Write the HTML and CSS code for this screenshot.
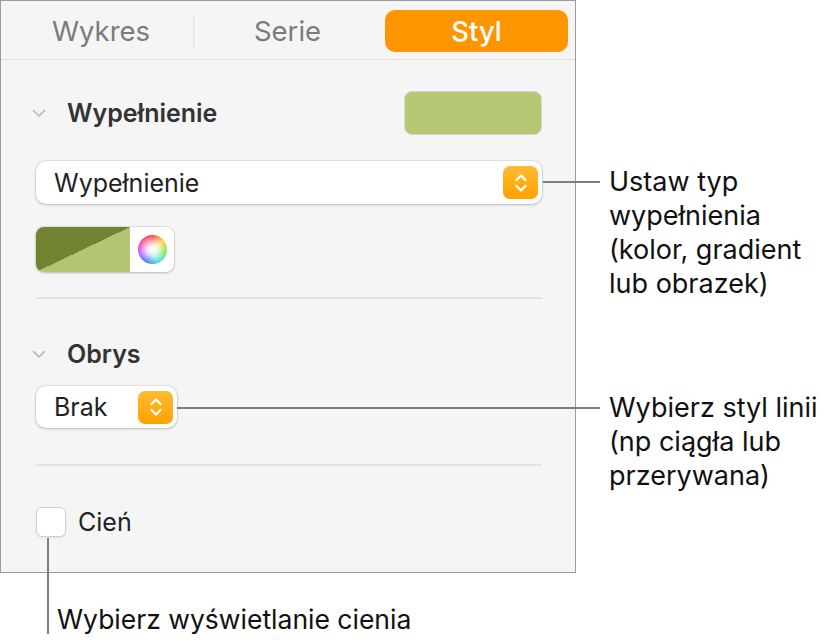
FILE: index.html
```html
<!DOCTYPE html>
<html lang="pl">
<head>
  <meta charset="UTF-8" />
  <title>Styl wykresu</title>
  <link rel="stylesheet" href="styles.css">
</head>
<body>
  <div class="figure">
    <div class="panel">
      <div class="tabs">
        <div class="tab">Wykres</div>
        <div class="tab tab-mid">Serie</div>
        <div class="tab active">Styl</div>
      </div>

      <div class="section">
        <div class="heading">
          <svg class="chevron" width="14" height="8" viewBox="0 0 14 8"><path d="M1 1l6 6 6-6" fill="none" stroke="#b8b8b8" stroke-width="1.6"/></svg>
          <span class="heading-text">Wypełnienie</span>
          <div class="swatch"></div>
        </div>
        <div class="select wide">
          <span>Wypełnienie</span>
          <span class="stepper">
            <svg width="16" height="24" viewBox="0 0 16 24"><path d="M3.5 9l4.5-4.5 4.5 4.5M3.5 15l4.5 4.5 4.5-4.5" fill="none" stroke="#fff" stroke-width="2.2" stroke-linecap="round" stroke-linejoin="round"/></svg>
          </span>
        </div>
        <div class="well">
          <div class="well-fill"></div>
          <div class="well-wheel"><span class="wheel"></span></div>
        </div>
      </div>

      <div class="section obrys">
        <div class="heading small">
          <svg class="chevron" width="14" height="8" viewBox="0 0 14 8"><path d="M1 1l6 6 6-6" fill="none" stroke="#b8b8b8" stroke-width="1.6"/></svg>
          <span class="heading-text">Obrys</span>
        </div>
        <div class="select narrow">
          <span>Brak</span>
          <span class="stepper">
            <svg width="16" height="24" viewBox="0 0 16 24"><path d="M3.5 9l4.5-4.5 4.5 4.5M3.5 15l4.5 4.5 4.5-4.5" fill="none" stroke="#fff" stroke-width="2.2" stroke-linecap="round" stroke-linejoin="round"/></svg>
          </span>
        </div>
      </div>

      <div class="section last">
        <label class="check">
          <span class="box"></span>
          <span>Cień</span>
        </label>
      </div>
    </div>

    <div class="callout c-fill">
      <span class="leader"></span>
      <p>Ustaw typ<br>wypełnienia<br>(kolor, gradient<br>lub obrazek)</p>
    </div>
    <div class="callout c-line">
      <span class="leader"></span>
      <p>Wybierz styl linii<br>(np ciągła lub<br>przerywana)</p>
    </div>
    <div class="callout c-shadow">
      <span class="leader-v"></span>
      <p>Wybierz wyświetlanie cienia</p>
    </div>
  </div>
</body>
</html>
```

FILE: styles.css
```css
body {
  margin: 0;
  background: #fff;
  font-family: "Inter", "Roboto", sans-serif;
  color: #222;
}

.figure {
  position: relative;
  width: 830px;
  height: 644px;
}

.panel {
  width: 576px;
  height: 573px;
  box-sizing: border-box;
  border: 1px solid #9b9b9b;
  background: #f5f5f5;
}

.tabs {
  display: grid;
  grid-template-columns: 184px 188px 187px;
  padding: 9px 6px 0 8px;
  height: 49px;
  border-bottom: 1px solid #e2e2e2;
}

.tab {
  height: 42px;
  display: flex;
  align-items: center;
  justify-content: center;
  font-size: 27.5px;
  color: #7b7b7b;
}

.tab-mid {
  border-left: 1px solid #e4e4e4;
  height: 34px;
  margin-top: 4px;
}

.tab.active {
  background: #ff9500;
  color: #fff;
  border-radius: 10px;
  font-weight: 500;
  margin-left: 4px;
}

.section {
  margin: 0 33px 0 35px;
  padding: 31px 0 25px;
  border-bottom: 2px solid #e2e2e2;
}

.section.obrys {
  padding: 41px 0 36px;
}

.section.last {
  border-bottom: none;
  padding: 41px 0 0;
}

.heading {
  display: flex;
  align-items: center;
  height: 44px;
}

.heading.small {
  height: 28px;
}

.chevron {
  margin: 0 21px 0 -4px;
  flex: none;
}

.heading-text {
  font-size: 25px;
  font-weight: 600;
  color: #333;
  flex: 1;
}

.swatch {
  width: 136px;
  height: 42px;
  border-radius: 8px;
  background: #b5c874;
  border: 1px solid #d6d6d6;
}

.select {
  display: flex;
  align-items: center;
  justify-content: space-between;
  box-sizing: border-box;
  height: 43px;
  background: #fff;
  border-radius: 10px;
  box-shadow: 0 0 0 1px rgba(0,0,0,0.07), 0 1px 3px rgba(0,0,0,0.18);
  padding: 0 4px 0 18px;
  font-size: 25px;
  color: #222;
}

.select.wide {
  margin-top: 26px;
}

.select.narrow {
  width: 141px;
  height: 42px;
  margin-top: 18px;
}

.stepper {
  width: 35px;
  height: 33px;
  border-radius: 7px;
  background: linear-gradient(#ffbb33, #ffa200);
  display: flex;
  align-items: center;
  justify-content: center;
}

.well {
  display: flex;
  width: 138px;
  height: 45px;
  margin-top: 23px;
  border-radius: 8px;
  overflow: hidden;
  background: #fff;
  box-shadow: 0 0 0 1px rgba(0,0,0,0.08), 0 1px 3px rgba(0,0,0,0.18);
}

.well-fill {
  width: 94px;
  background: linear-gradient(to bottom right, #718330 50%, #b2c572 50%);
}

.well-wheel {
  flex: 1;
  display: flex;
  align-items: center;
  justify-content: center;
}

.wheel {
  width: 29px;
  height: 29px;
  border-radius: 50%;
  background: radial-gradient(circle, #fff 0%, rgba(255,255,255,0.85) 25%, rgba(255,255,255,0) 72%),
    conic-gradient(#ff3b3b, #ffcf33, #6fe84a, #34e0d8, #3a7bff, #c44dff, #ff3b8a, #ff3b3b);
}

.check {
  display: flex;
  align-items: center;
  gap: 12px;
  font-size: 25px;
  color: #222;
}

.box {
  width: 28px;
  height: 28px;
  border-radius: 6px;
  background: #fff;
  border: 1px solid #cfcfcf;
  box-shadow: 0 1px 2px rgba(0,0,0,0.08);
}

.callout {
  position: absolute;
  display: flex;
  align-items: flex-start;
}

.callout p {
  margin: 0;
  font-size: 27px;
  line-height: 34px;
  color: #111;
}

.leader {
  display: block;
  width: 57px;
  height: 2px;
  background: #7d7d7d;
  margin: 16px 9px 0 0;
}

.c-fill {
  left: 543px;
  top: 165px;
}

.c-line {
  left: 177px;
  top: 391px;
}

.c-line .leader {
  width: 423px;
}

.c-shadow {
  left: 47px;
  top: 538px;
  align-items: flex-end;
}

.leader-v {
  display: block;
  width: 2px;
  height: 96px;
  background: #7d7d7d;
  margin-right: 8px;
}

.c-shadow p {
  font-size: 26.5px;
  line-height: 30px;
}
```
